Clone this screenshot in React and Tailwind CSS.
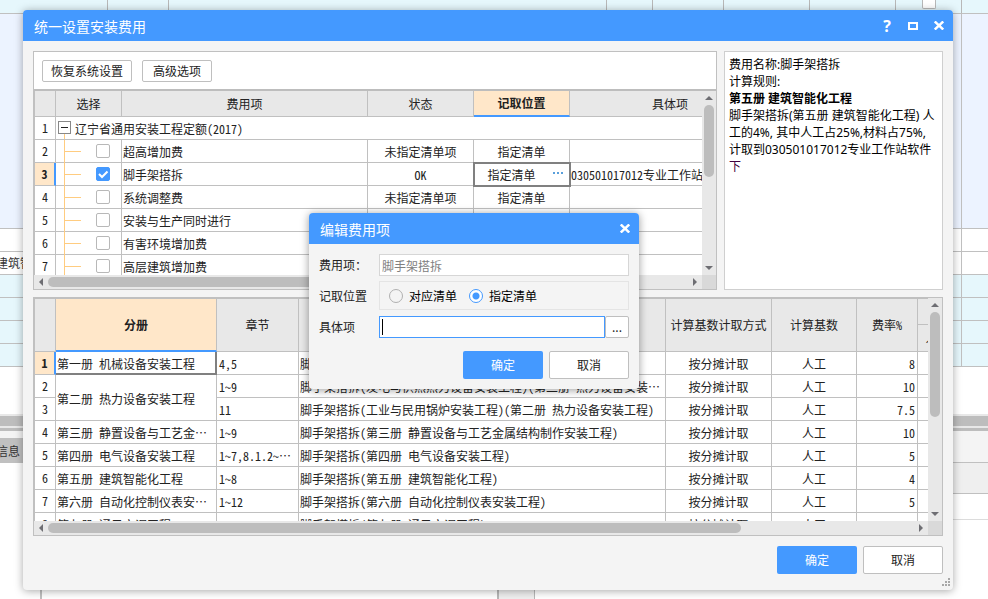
import React, { useState } from "react";

const feeItems = [
  { id: 2, name: "超高增加费", status: "未指定清单项", position: "指定清单" },
  { id: 3, name: "脚手架搭拆", status: "OK", position: "指定清单", target: "030501017012专业工作站软件" },
  { id: 4, name: "系统调整费", status: "未指定清单项", position: "指定清单" },
  { id: 5, name: "安装与生产同时进行", status: "", position: "" },
  { id: 6, name: "有害环境增加费", status: "", position: "" },
  { id: 7, name: "高层建筑增加费", status: "", position: "" },
];

const volumes = [
  { id: 1, volume: "第一册 机械设备安装工程", chapter: "4,5", item: "脚手架搭拆(第一册 机械设备安装工程)", rate: "8" },
  { id: 2, volume: "第二册 热力设备安装工程", span: 2, chapter: "1~9", item: "脚手架搭拆(发电与供热热力设备安装工程)(第二册 热力设备安装", cut: "item", rate: "10" },
  { id: 3, chapter: "11", item: "脚手架搭拆(工业与民用锅炉安装工程)(第二册 热力设备安装工程)", rate: "7.5" },
  { id: 4, volume: "第三册 静置设备与工艺金", cut: "volume", chapter: "1~9", item: "脚手架搭拆(第三册 静置设备与工艺金属结构制作安装工程)", rate: "10" },
  { id: 5, volume: "第四册 电气设备安装工程", cut: "chapter", chapter: "1~7,8.1.2~", item: "脚手架搭拆(第四册 电气设备安装工程)", rate: "5" },
  { id: 6, volume: "第五册 建筑智能化工程", chapter: "1~8", item: "脚手架搭拆(第五册 建筑智能化工程)", rate: "4" },
  { id: 7, volume: "第六册 自动化控制仪表安", cut: "volume", chapter: "1~12", item: "脚手架搭拆(第六册 自动化控制仪表安装工程)", rate: "5" },
  { id: 8, volume: "第七册 通风空调工程", chapter: "1~4", item: "脚手架搭拆(第七册 通风空调工程)", rate: "5" },
];

const th = "border-r border-b border-[#c0c0c0] bg-[#e8e8e8] p-0 font-normal";
const td = "h-[23px] border-r border-b border-[#c0c0c0] bg-white px-0 pt-[2px] pb-0 leading-5 whitespace-nowrap overflow-hidden";
const gridFont = "font-['Noto_Sans_Mono_CJK_SC','Liberation_Serif','Noto_Sans_CJK_SC',monospace]";
const okButton = "h-7 w-20 rounded-xs bg-[#4499ff] text-white";
const plainButton = "rounded-xs border border-[#bfbfbf] bg-white text-[#222]";

const Ellipsis = () => <span className="font-['Noto_Sans_CJK_SC',sans-serif] leading-none">…</span>;

const CloseIcon = () => (
  <svg width="10" height="9" viewBox="0 0 10 9" stroke="currentColor" strokeWidth="2.4">
    <path d="M0.8 0.5 9.2 8.5M9.2 0.5 0.8 8.5" />
  </svg>
);

const Arrow = ({ d }) => (
  <svg className="shrink-0" width="14" height="14" viewBox="0 0 14 14" fill="#6e6e73">
    <path d={d} />
  </svg>
);

const VScroll = ({ thumb }) => (
  <div className="flex w-[14px] shrink-0 flex-col bg-[#e8e8e8]">
    <Arrow d="M3 9 7 5 11 9Z" />
    <div className="min-h-0 flex-1 px-[2px]">
      <div className={`${thumb} rounded-full bg-[#bdbdbd]`} />
    </div>
    <Arrow d="M3 5 11 5 7 9Z" />
  </div>
);

const HScroll = ({ thumb }) => (
  <div className="flex h-[14px] shrink-0 bg-[#e8e8e8]">
    <Arrow d="M9 3 9 11 5 7Z" />
    <div className="min-w-0 flex-1 py-[2px]">
      <div className={`${thumb} h-[10px] rounded-full bg-[#bdbdbd]`} />
    </div>
    <Arrow d="M5 3 9 7 5 11Z" />
    <div className="w-[14px] bg-[#d9d9d9]" />
  </div>
);

const RowNumber = ({ id, active }) =>
  active ? (
    <td className="h-[23px] border-r-2 border-b border-r-[#4499ff] border-b-[#c0c0c0] bg-[#ffe7c9] p-0 text-center leading-[22px] font-bold">{id}</td>
  ) : (
    <td className="h-[23px] border-r border-b border-[#c0c0c0] bg-white p-0 text-center leading-[22px]">{id}</td>
  );

const Backdrop = () => (
  <div className="absolute inset-0 flex flex-col bg-white text-xs text-[#333]">
    <div className="flex h-[14px] shrink-0 border-b border-[#c0c0c0] bg-[#e6f7fc]">
      <div className="w-[108px] border-r border-[#b8b8b8]" />
      <div className="w-[61px] border-r border-[#b8b8b8]" />
      <div className="flex-1 border-r border-[#b8b8b8]" />
      <div className="w-[46px] border-r border-[#b8b8b8]" />
      <div className="w-[71px] border-r border-[#b8b8b8]" />
      <div className="w-[86px] border-r border-[#b8b8b8]" />
      <div className="w-[86px] border-r border-[#b8b8b8]" />
      <div className="flex w-[66px] justify-center border-r border-[#b8b8b8]">
        <div className="h-[9px] w-[14px] rounded-b-xs border border-t-0 border-[#b8b8b8] bg-white" />
      </div>
      <div className="w-[26px]" />
    </div>
    {["h-[215px] bg-[#ecf3ff]", "h-[23px] bg-white", "h-[23px] bg-white", "h-[23px] bg-[#e6f7fc]", "h-[23px] bg-[#e6f7fc]", "h-[23px] bg-[#e6f7fc]", "h-[23px] bg-[#e6f7fc]"].map((row, i) => (
      <div key={i} className={`${row} flex shrink-0 border-b border-[#c0c0c0]`}>
        <div className="flex-1 -indent-1 leading-[22px]">{i === 2 && "建筑智能"}</div>
        <div className="w-[27px] border-l border-[#c0c0c0]" />
      </div>
    ))}
    <div className="mt-[47px] h-[14px] shrink-0 border-y-2 border-[#e8e8e8] bg-[#bdbdbd]" />
    <div className="h-[3px] shrink-0 bg-[#bdbdbd]" />
    <div className="flex min-h-0 flex-1">
      <div className="flex w-[42px] flex-col border-r-2 border-[#c0c0c0]">
        <div className="h-[7px] bg-[#f4f4f4]" />
        <div className="h-[25px] bg-[#c0c0c0] pt-[2px] -indent-1 leading-[22px]">信息</div>
      </div>
      <div className="w-[457px] border-r-2 border-[#b8b8b8]" />
      <div className="w-9 border-r border-[#b8b8b8] bg-[#efefef]" />
      <div className="flex-1">
        <div className="h-8 border-b border-[#c0c0c0] bg-[#f4f4f4]" />
        <div className="h-[31px] border-b border-[#c0c0c0] bg-[#efefef]" />
        <div className="h-[26px] border-b border-[#dcdcdc]" />
      </div>
    </div>
  </div>
);

const FeeGrid = () => (
  <div className="flex min-w-0 flex-1 flex-col border border-[#c0c0c0] bg-white">
    <div className="flex h-[39px] shrink-0 gap-[10px] border-b-2 border-[#bdbdbd] px-2 pt-2">
      <button type="button" className={`${plainButton} h-[22px] w-[90px]`}>恢复系统设置</button>
      <button type="button" className={`${plainButton} h-[22px] w-[70px]`}>高级选项</button>
    </div>
    <div className="flex min-h-0 flex-1">
      <div className="min-w-0 flex-1 overflow-hidden border-l border-[#c0c0c0]">
        <table className={`${gridFont} w-[736px] table-fixed border-separate border-spacing-0`}>
          <colgroup>
            <col className="w-[21px]" />
            <col className="w-[66px]" />
            <col className="w-[246px]" />
            <col className="w-[106px]" />
            <col className="w-[96px]" />
            <col className="w-[201px]" />
          </colgroup>
          <thead>
            <tr>
              <th className={`${th} h-[26px]`} />
              <th className={th}>选择</th>
              <th className={th}>费用项</th>
              <th className={th}>状态</th>
              <th className="border-r border-b-2 border-r-[#c0c0c0] border-b-[#4499ff] bg-[#ffe7c9] p-0 font-bold">记取位置</th>
              <th className={th}>具体项</th>
            </tr>
          </thead>
          <tbody>
            <tr>
              <RowNumber id={1} />
              <td colSpan={5} className={td}>
                <div className="flex h-5 items-start">
                  <div className="ml-[2px] flex flex-col">
                    <button type="button" aria-label="折叠" className="mt-[2px] flex size-[13px] shrink-0 items-center justify-center border border-[#888] bg-white">
                      <span className="h-px w-[7px] bg-[#222]" />
                    </button>
                    <span className="ml-[6px] h-[6px] w-px bg-[#ffcc80]" />
                  </div>
                  <span className="ml-1">辽宁省通用安装工程定额(2017)</span>
                </div>
              </td>
            </tr>
            {feeItems.map((row) => {
              const active = row.id === 3;
              return (
                <tr key={row.id}>
                  <RowNumber id={row.id} active={active} />
                  <td className="h-[23px] border-r border-b border-[#c0c0c0] bg-white p-0 align-top">
                    <div className="flex h-[22px] items-center pl-2">
                      <span className="flex h-[23px] w-[17px] items-center self-start border-l border-[#ffcc80]">
                        <span className="h-px w-full bg-[#ffcc80]" />
                      </span>
                      <span className="relative ml-[15px] flex">
                        <input
                          type="checkbox"
                          aria-label={row.name}
                          defaultChecked={active}
                          className="peer size-[14px] appearance-none rounded-xs border border-[#b8b8b8] bg-white checked:border-[#4499ff] checked:bg-[#4499ff]"
                        />
                        <svg className="pointer-events-none absolute inset-0 hidden peer-checked:block" width="14" height="14" viewBox="0 0 14 14" fill="none" stroke="white" strokeWidth="2">
                          <path d="M3 7 6 10 11.5 4.5" />
                        </svg>
                      </span>
                    </div>
                  </td>
                  <td className={`${td} pl-px`}>{row.name}</td>
                  <td className={`${td} text-center`}>{row.status}</td>
                  {active ? (
                    <td className={`${td} outline-2 -outline-offset-1 outline-[#808080]`}>
                      <div className="flex h-5 items-center">
                        <span className="flex-1 text-center">{row.position}</span>
                        <button type="button" aria-label="选择清单" className="flex h-4 w-5 items-center gap-[2px] self-start pl-1">
                          <span className="size-[2px] bg-[#5aa0dc]" />
                          <span className="size-[2px] bg-[#5aa0dc]" />
                          <span className="size-[2px] bg-[#5aa0dc]" />
                        </button>
                      </div>
                    </td>
                  ) : (
                    <td className={`${td} text-center`}>{row.position}</td>
                  )}
                  <td className={`${td} pl-px`}>{row.target}</td>
                </tr>
              );
            })}
          </tbody>
        </table>
      </div>
      <VScroll thumb="h-[72px]" />
    </div>
    <HScroll thumb="w-3/4" />
  </div>
);

const RuleText = () => (
  <div className="w-[219px] shrink-0 border border-[#cfcfcf] bg-white pt-1 pl-1 font-['Noto_Sans','Noto_Sans_CJK_SC',sans-serif] leading-[17px] whitespace-nowrap text-black">
    <p>费用名称:脚手架搭拆</p>
    <p>计算规则:</p>
    <p className="font-bold">第五册 建筑智能化工程</p>
    <p>
      脚手架搭拆(第五册 建筑智能化工程) 人<br />
      工的4%, 其中人工占25%,材料占75%,<br />
      计取到030501017012专业工作站软件<br />
      <span className="text-[#400040]">下</span>
    </p>
  </div>
);

const VolumeGrid = () => (
  <div className="flex min-h-0 min-w-0 flex-col border border-[#c0c0c0] bg-white">
    <div className="flex min-h-0 flex-1">
      <div className="min-w-0 flex-1 overflow-hidden border-t border-l border-[#c0c0c0]">
        <table className={`${gridFont} w-[929px] table-fixed border-separate border-spacing-0`}>
          <colgroup>
            <col className="w-[21px]" />
            <col className="w-[161px]" />
            <col className="w-[82px]" />
            <col className="w-[367px]" />
            <col className="w-[106px]" />
            <col className="w-[85px]" />
            <col className="w-[61px]" />
            <col className="w-[46px]" />
          </colgroup>
          <thead>
            <tr>
              <th rowSpan={2} className={th} />
              <th rowSpan={2} className="border-r border-b-2 border-r-[#c0c0c0] border-b-[#4499ff] bg-[#ffe7c9] p-0 font-bold">分册</th>
              <th rowSpan={2} className={th}>章节</th>
              <th rowSpan={2} className={th}>费用项</th>
              <th rowSpan={2} className={th}>计算基数计取方式</th>
              <th rowSpan={2} className={th}>计算基数</th>
              <th rowSpan={2} className={th}>费率%</th>
              <th className={`${th} h-[26px]`} />
            </tr>
            <tr>
              <th className={`${th} h-[27px]`}>人工%</th>
            </tr>
          </thead>
          <tbody>
            {volumes.map((row) => (
              <tr key={row.id}>
                <RowNumber id={row.id} active={row.id === 1} />
                {row.id === 1 && (
                  <td className="border-r-2 border-b-2 border-[#808080] bg-white pt-[2px] pr-0 pb-0 pl-px leading-[19px] whitespace-nowrap">{row.volume}</td>
                )}
                {row.id !== 1 && row.volume && (
                  <td rowSpan={row.span || 1} className={`${td} pl-px`}>
                    {row.volume}
                    {row.cut === "volume" && <Ellipsis />}
                  </td>
                )}
                <td className={`${td} pl-[2px]`}>
                  {row.chapter}
                  {row.cut === "chapter" && <Ellipsis />}
                </td>
                <td className={`${td} pl-px`}>
                  {row.item}
                  {row.cut === "item" && <Ellipsis />}
                </td>
                <td className={`${td} text-center`}>按分摊计取</td>
                <td className={`${td} text-center`}>人工</td>
                <td className={`${td} pr-[2px] text-right`}>{row.rate}</td>
                <td className={td} />
              </tr>
            ))}
          </tbody>
        </table>
      </div>
      <VScroll thumb="h-[105px]" />
    </div>
    <HScroll thumb="w-4/5" />
  </div>
);

const EditFeeModal = () => {
  const [position, setPosition] = useState("specified");
  const radio =
    "size-[14px] appearance-none rounded-full border border-[#b0b0b0] bg-[#f4f4f4] checked:border-[#4499ff] checked:bg-[radial-gradient(circle,#4499ff_3px,#ffffff_4px)]";

  return (
    <section role="dialog" aria-label="编辑费用项" className="absolute top-[213px] left-[309px] w-[330px] overflow-hidden rounded bg-[#f4f4f4] shadow-[0_1px_8px_rgba(0,0,0,0.4)]">
      <header className="flex h-[31px] items-center justify-between bg-[#4499ff] pr-px pl-[11px] text-white">
        <h2 className="text-sm">编辑费用项</h2>
        <button type="button" aria-label="关闭" className="flex h-[31px] w-[26px] items-center justify-center">
          <CloseIcon />
        </button>
      </header>
      <form className="p-[10px]" onSubmit={(e) => e.preventDefault()}>
        <div className="flex items-center">
          <label htmlFor="fee-name" className="w-[60px]">费用项：</label>
          <input id="fee-name" disabled defaultValue="脚手架搭拆" className="h-[22px] min-w-0 flex-1 border border-[#d6d6d6] bg-white px-[2px] text-[#808080]" />
        </div>
        <div className="mt-[5px] flex items-center">
          <span id="position-label" className="w-[60px]">记取位置</span>
          <div role="radiogroup" aria-labelledby="position-label" className="flex h-[29px] flex-1 items-center gap-3 border border-[#e4e4e4] pl-[9px] text-black">
            <label className="flex items-center gap-[6px]">
              <input type="radio" name="position" className={radio} checked={position === "matched"} onChange={() => setPosition("matched")} />
              对应清单
            </label>
            <label className="flex items-center gap-[6px]">
              <input type="radio" name="position" className={radio} checked={position === "specified"} onChange={() => setPosition("specified")} />
              指定清单
            </label>
          </div>
        </div>
        <div className="mt-[6px] flex items-center">
          <label htmlFor="fee-target" className="w-[60px]">具体项</label>
          <div className="relative flex h-[22px] min-w-0 flex-1">
            <input id="fee-target" className="h-full w-full border border-[#4499ff] bg-white px-[3px] outline-none" />
            <span className="absolute top-[3px] left-[3px] h-4 w-px bg-black" />
          </div>
          <button type="button" className={`${plainButton} h-[22px] w-6`}>...</button>
        </div>
        <div className="mt-[13px] flex justify-end gap-[6px]">
          <button type="submit" className={okButton}>确定</button>
          <button type="button" className={`${plainButton} h-7 w-20`}>取消</button>
        </div>
      </form>
    </section>
  );
};

const App = () => {
  return (
    <main lang="zh-CN" className="relative h-screen overflow-hidden font-['Noto_Sans_CJK_SC',sans-serif] text-xs text-[#222]">
      <Backdrop />

      {/* Main window */}
      <section role="dialog" aria-label="统一设置安装费用" className="absolute top-[10px] right-[35px] bottom-[9px] left-[23px] flex flex-col overflow-hidden rounded bg-[#f4f4f4] shadow-[0_1px_9px_rgba(0,0,0,0.35)]">
        <header className="flex h-[31px] shrink-0 items-center bg-[#4499ff] pr-px pl-[11px] text-white">
          <h1 className="flex-1 text-sm">统一设置安装费用</h1>
          <button type="button" aria-label="帮助" className="h-[31px] w-[26px] font-['Open_Sans',sans-serif] text-base font-bold">?</button>
          <button type="button" aria-label="最大化" className="flex h-[31px] w-[26px] items-center justify-center">
            <span className="h-2 w-[10px] border-2 border-white" />
          </button>
          <button type="button" aria-label="关闭" className="flex h-[31px] w-[26px] items-center justify-center">
            <CloseIcon />
          </button>
        </header>

        <div className="grid min-h-0 flex-1 grid-cols-1 grid-rows-2 gap-[7px] px-[10px] pt-[10px]">
          <div className="flex min-h-0 min-w-0 gap-[7px]">
            <FeeGrid />
            <RuleText />
          </div>
          <VolumeGrid />
        </div>

        <footer className="flex shrink-0 justify-end gap-[6px] px-[10px] pt-[10px] pb-4">
          <button type="button" className={okButton}>确定</button>
          <button type="button" className={`${plainButton} h-7 w-20`}>取消</button>
        </footer>
        <svg className="absolute right-[3px] bottom-1" width="8" height="8" viewBox="0 0 8 8" fill="#a8a8a8">
          <path d="M6 0h2v2H6zM3 3h2v2H3zM6 3h2v2H6zM0 6h2v2H0zM3 6h2v2H3zM6 6h2v2H6z" />
        </svg>
      </section>

      <EditFeeModal />
    </main>
  );
};

export default App;
